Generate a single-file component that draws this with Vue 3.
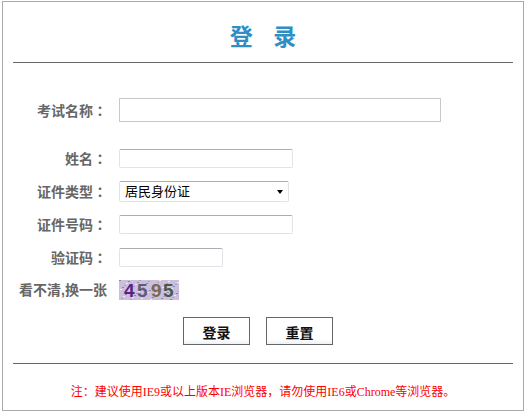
<script setup>
import { ref } from "vue";

const examName = ref("");
const form = ref({ name: "", idType: "居民身份证", idNo: "", code: "" });

// captcha noise, dots over the lilac background
const noise = [];
for (let i = 0; i < 70; i++) {
  noise.push({
    x: (i * 37) % 60,
    y: (i * 13) % 20,
    fill: i % 3 === 0 ? "#8f7fb5" : i % 3 === 1 ? "#f1e9f5" : "#a99cc6",
  });
}
</script>

<template>
  <div class="login-box">
    <h1 class="title">登 录</h1>

    <form class="login-form" @submit.prevent>
      <div class="row row-exam">
        <label class="label">考试名称<span class="colon">：</span></label>
        <input v-model="examName" class="field field-exam" type="text" />
      </div>

      <div class="row">
        <label class="label">姓名<span class="colon">：</span></label>
        <input v-model="form.name" class="field field-md" type="text" />
      </div>
      <div class="row">
        <label class="label">证件类型<span class="colon">：</span></label>
        <div class="select-wrap">
          <select v-model="form.idType" class="field-select">
            <option>居民身份证</option>
          </select>
        </div>
      </div>
      <div class="row row-id">
        <label class="label">证件号码<span class="colon">：</span></label>
        <input v-model="form.idNo" class="field field-md" type="text" />
      </div>
      <div class="row">
        <label class="label">验证码<span class="colon">：</span></label>
        <input v-model="form.code" class="field field-sm" type="text" />
      </div>
      <div class="row row-captcha">
        <a class="label">看不清,换一张</a>
        <svg class="captcha" width="60" height="20" viewBox="0 0 60 20">
          <rect width="60" height="20" fill="#cbbfdc" />
          <rect
            v-for="(dot, i) in noise"
            :key="i"
            :x="dot.x"
            :y="dot.y"
            width="2"
            height="1"
            :fill="dot.fill"
          />
          <text x="5" y="17" fill="#5b1f86" class="digit">4</text>
          <text x="18" y="17" fill="#5f5a78" class="digit">5</text>
          <text x="32" y="17" fill="#7a6a50" class="digit">9</text>
          <text x="44" y="17" fill="#4c5a48" class="digit">5</text>
        </svg>
      </div>

      <div class="actions">
        <button class="btn" type="submit">登录</button>
        <button class="btn" type="reset">重置</button>
      </div>
    </form>

    <p class="note">注：建议使用IE9或以上版本IE浏览器，请勿使用IE6或Chrome等浏览器。</p>
  </div>
</template>

<style>
html,
body {
  background: #fff;
}
</style>

<style scoped>
.login-box {
  box-sizing: border-box;
  width: 522px;
  height: 410px;
  margin: 1px 0 0 2px;
  padding: 0 10px;
  border: 1px solid #aaa;
  background: #fff;
  font-family: "Liberation Sans", "Noto Sans CJK SC", sans-serif;
}

.title {
  margin: 0;
  height: 60px;
  line-height: 70px;
  border-bottom: 1px solid #666;
  text-align: center;
  font-size: 23px;
  font-weight: bold;
  color: #2f8fc4;
  word-spacing: 14px;
}

.login-form {
  padding-top: 35px;
}

.row {
  display: flex;
  align-items: center;
  margin-bottom: 13px;
}

.row-exam {
  margin-bottom: 27px;
}

.row-id {
  margin-bottom: 14px;
}

.row-captcha {
  margin-bottom: 17px;
}

.label {
  box-sizing: border-box;
  width: 106px;
  padding-right: 12px;
  text-align: right;
  font-size: 14px;
  line-height: 16px;
  font-weight: bold;
  color: #666;
  white-space: nowrap;
}

/* TC puts the full-width colon in the middle of its cell */
.colon {
  font-family: "Noto Sans CJK TC", sans-serif;
}

.field {
  box-sizing: border-box;
  height: 19px;
  padding: 0 4px;
  border: 1px solid #e0e3e8;
  border-top-color: #abadb3;
  border-radius: 2px;
  background: #fff;
  outline: none;
}

.field-exam {
  width: 322px;
  height: 24px;
  border: 1px solid #c8c8c8;
  border-radius: 0;
}

.field-md {
  width: 174px;
}

.field-sm {
  width: 104px;
}

.select-wrap {
  position: relative;
  width: 170px;
  height: 21px;
}

.select-wrap::after {
  content: "";
  position: absolute;
  top: 9px;
  right: 6px;
  border-top: 4px solid #000;
  border-left: 3px solid transparent;
  border-right: 3px solid transparent;
  pointer-events: none;
}

.field-select {
  display: block;
  box-sizing: border-box;
  width: 100%;
  height: 21px;
  padding: 0 5px;
  appearance: none;
  border: 1px solid #e0e3e8;
  border-top-color: #abadb3;
  border-radius: 2px;
  background: #fff;
  font-family: "Liberation Sans", "Noto Sans CJK SC", sans-serif;
  font-size: 13px;
  color: #000;
  outline: none;
}

.captcha {
  display: block;
}

.digit {
  font-family: "Liberation Sans", sans-serif;
  font-size: 19px;
  font-weight: bold;
}

.actions {
  display: flex;
  justify-content: center;
  gap: 16px;
  padding-right: 10px;
  padding-bottom: 18px;
  border-bottom: 1px solid #666;
}

.btn {
  box-sizing: border-box;
  width: 67px;
  height: 28px;
  padding: 2px 0 0;
  border: 1px solid #666;
  background: linear-gradient(#fff 80%, #edf2f8);
  font-family: "Liberation Sans", "Noto Sans CJK SC", sans-serif;
  font-size: 14px;
  font-weight: bold;
  color: #111;
}

.note {
  margin: 0;
  padding-top: 18px;
  text-align: center;
  font-family: "Liberation Serif", "Noto Sans CJK SC", serif;
  font-size: 12px;
  color: #f00;
}
</style>
